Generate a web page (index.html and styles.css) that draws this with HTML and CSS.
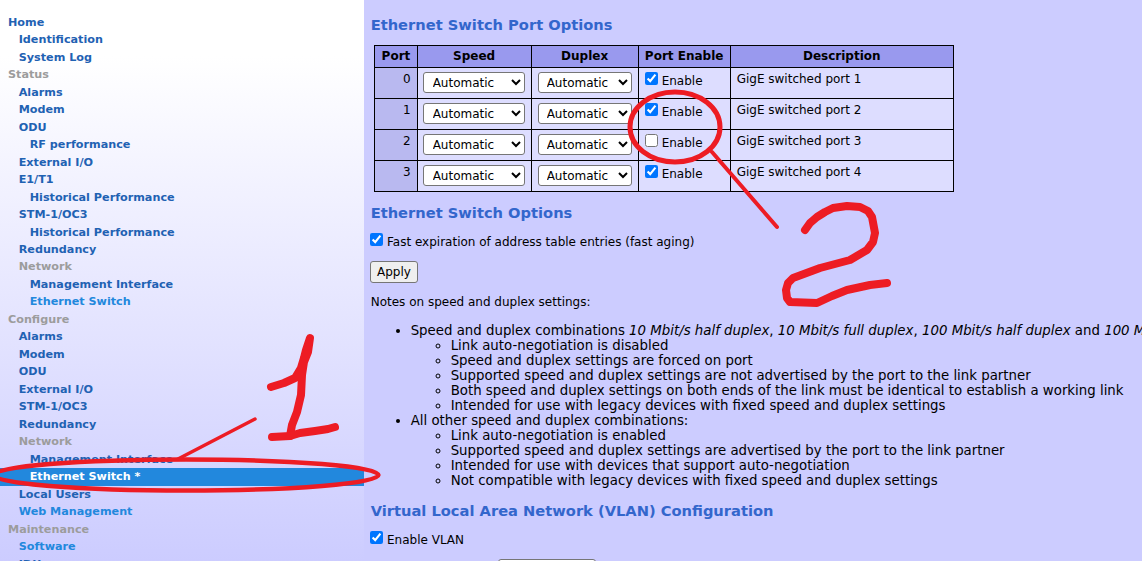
FILE: index.html
```
<!DOCTYPE html>
<html lang="en">
<head>
<meta charset="utf-8">
<title>Ethernet Switch</title>
<link rel="stylesheet" href="styles.css">
</head>
<body>
<div class="page">
<nav class="side">
<a class="n0">Home</a>
<a class="n1">Identification</a>
<a class="n1">System Log</a>
<a class="n0 off">Status</a>
<a class="n1">Alarms</a>
<a class="n1">Modem</a>
<a class="n1">ODU</a>
<a class="n2">RF performance</a>
<a class="n1">External I/O</a>
<a class="n1">E1/T1</a>
<a class="n2">Historical Performance</a>
<a class="n1">STM-1/OC3</a>
<a class="n2">Historical Performance</a>
<a class="n1">Redundancy</a>
<a class="n1 off">Network</a>
<a class="n2">Management Interface</a>
<a class="n2 lt">Ethernet Switch</a>
<a class="n0 off">Configure</a>
<a class="n1">Alarms</a>
<a class="n1">Modem</a>
<a class="n1">ODU</a>
<a class="n1">External I/O</a>
<a class="n1">STM-1/OC3</a>
<a class="n1">Redundancy</a>
<a class="n1 off">Network</a>
<a class="n2">Management Interface</a>
<a class="n2 cur">Ethernet Switch *</a>
<a class="n1">Local Users</a>
<a class="n1 lt">Web Management</a>
<a class="n0 off">Maintenance</a>
<a class="n1 lt">Software</a>
<a class="n1">IDU</a>
</nav>
<main class="main">
<h2 class="h h-first">Ethernet Switch Port Options</h2>
<table class="ports">
<thead><tr><th>Port</th><th>Speed</th><th>Duplex</th><th>Port Enable</th><th class="desc-h">Description</th></tr></thead>
<tbody>
<tr><td class="num">0</td><td class="sel"><select class="s1"><option>Automatic</option></select></td><td class="sel"><select class="s2"><option>Automatic</option></select></td><td class="en"><label class="chk"><input type="checkbox" checked>Enable</label></td><td class="desc">GigE switched port 1</td></tr>
<tr><td class="num">1</td><td class="sel"><select class="s1"><option>Automatic</option></select></td><td class="sel"><select class="s2"><option>Automatic</option></select></td><td class="en"><label class="chk"><input type="checkbox" checked>Enable</label></td><td class="desc">GigE switched port 2</td></tr>
<tr><td class="num">2</td><td class="sel"><select class="s1"><option>Automatic</option></select></td><td class="sel"><select class="s2"><option>Automatic</option></select></td><td class="en"><label class="chk"><input type="checkbox">Enable</label></td><td class="desc">GigE switched port 3</td></tr>
<tr><td class="num">3</td><td class="sel"><select class="s1"><option>Automatic</option></select></td><td class="sel"><select class="s2"><option>Automatic</option></select></td><td class="en"><label class="chk"><input type="checkbox" checked>Enable</label></td><td class="desc">GigE switched port 4</td></tr>
</tbody>
</table>
<h2 class="h h-opt">Ethernet Switch Options</h2>
<label class="chk line"><input type="checkbox" checked>Fast expiration of address table entries (fast aging)</label>
<button class="apply" type="button">Apply</button>
<p class="notes">Notes on speed and duplex settings:</p>
<ul class="outer">
<li>Speed and duplex combinations <em>10 Mbit/s half duplex</em>, <em>10 Mbit/s full duplex</em>, <em>100 Mbit/s half duplex</em> and <em>100 Mbit/s full duplex</em>:
<ul class="inner">
<li>Link auto-negotiation is disabled</li>
<li>Speed and duplex settings are forced on port</li>
<li>Supported speed and duplex settings are not advertised by the port to the link partner</li>
<li>Both speed and duplex settings on both ends of the link must be identical to establish a working link</li>
<li>Intended for use with legacy devices with fixed speed and duplex settings</li>
</ul></li>
<li>All other speed and duplex combinations:
<ul class="inner">
<li>Link auto-negotiation is enabled</li>
<li>Supported speed and duplex settings are advertised by the port to the link partner</li>
<li>Intended for use with devices that support auto-negotiation</li>
<li>Not compatible with legacy devices with fixed speed and duplex settings</li>
</ul></li>
</ul>
<h2 class="h h-vlan">Virtual Local Area Network (VLAN) Configuration</h2>
<label class="chk line line-vlan"><input type="checkbox" checked>Enable VLAN</label>
<select class="vlan"><option></option></select>
</main>
</div>
<svg class="marks" width="1142" height="561" viewBox="0 0 1142 561" fill="none" stroke="#ed1c24" stroke-linecap="round" stroke-linejoin="round" aria-hidden="true">
<ellipse cx="186" cy="475" rx="192.500" ry="15.500" stroke-width="4.500"/>
<path d="M255 419L178 459" stroke-width="3.500"/>
<path d="M271 387L284 383L295 378L301 368L304 358L306 350L310 338L308 352L304 362L302 375L301 395L297 412L292 425L290 436" stroke-width="8"/>
<path d="M272 437L290 436L300 433L315 431L328 429L335 427" stroke-width="8"/>
<ellipse cx="675" cy="127" rx="45" ry="35" stroke-width="5"/>
<path d="M712 152L777 227" stroke-width="4"/>
<path d="M805 230L810 223L817 217L825 212L833 208L847 206L860 207L868 211L872 217L875 233L873 242L867 250L850 260L820 268L793 278L788 283L786 290L787 298L790 302L817 303L832 296L847 290L870 285L887 283" stroke-width="8"/>
</svg>
</body>
</html>
```
FILE: styles.css
```
html, body {
  margin: 0;
  height: 100%;
  overflow: hidden;
}
body {
  font-family: "DejaVu Sans", sans-serif;
  font-size: 13.333px;
  color: #000;
  background: #ccf;
  position: relative;
}
.page {
  display: flex;
  height: 561px;
  overflow: hidden;
}
.side {
  width: 364px;
  flex: none;
  height: 561px;
  overflow: hidden;
  padding-top: 13.71px;
  box-sizing: border-box;
  background: linear-gradient(180deg, #fff 10%, #ccf 100%);
  display: flex;
  flex-direction: column;
  font-size: 11.2px;
  font-weight: bold;
  line-height: 17.49px;
}
.side a {
  display: block;
  flex: none;
  height: 17.49px;
  color: #1f62b3;
}
.n0 { padding-left: 8px; }
.n1 { padding-left: 18.7px; }
.n2 { padding-left: 29.7px; }
.side a.off { color: #9c9c9c; }
.side a.lt { color: #2288dd; }
.side a.cur { background: #2288dd; color: #fff; }
.main {
  flex: 1;
  min-width: 0;
  padding-left: 6.67px;
  overflow: hidden;
  white-space: nowrap;
}
.h {
  margin: 0;
  font-size: 14.667px;
  font-weight: bold;
  color: #3366cc;
  line-height: 18px;
}
.h-first { margin-top: 16px; }
.h-opt { margin-top: 12px; }
.h-vlan { margin-top: 14px; }
.ports {
  border-collapse: collapse;
  margin: 11px 0 0 3.6px;
  table-layout: fixed;
  width: 579.730px;
  font-size: 12px;
  line-height: 15px;
}
.ports th {
  background: #99e;
  border: 1px solid #000;
  height: 21px;
  padding: 0;
  font-size: 12px;
}
.ports th:nth-child(1) { width: 41.400px; }
.ports th:nth-child(2) { width: 113px; }
.ports th:nth-child(3) { width: 106px; }
.ports th:nth-child(4) { width: 91px; }
.ports td {
  background: #ddf;
  border: 1px solid #000;
  height: 30px;
  padding: 0;
  vertical-align: top;
}
.ports td.num {
  background: #b9b9f0;
  text-align: right;
  padding: 4px 6px 0 0;
  height: 26px;
}
.ports td.sel { padding: 4px 0 0 6px; height: 26px; }
.ports td.en { padding: 4px 0 0 6px; height: 26px; }
.ports td.desc { padding: 4px 0 0 6px; height: 26px; }
select {
  font: 12px "DejaVu Sans", sans-serif;
  display: block;
  height: 21px;
  background: #fff;
  color: #000;
  border: 1px solid #767676;
  border-radius: 3px;
  padding: 0 0 0 4px;
  margin: 0;
}
.s1 { width: 102px; margin-left: -1px; padding-left: 5px; }
.s2 { width: 94px; }
.chk {
  display: flex;
  align-items: flex-start;
  font-size: 12px;
  line-height: 19px;
}
.chk input {
  width: 13px;
  height: 13px;
  margin: 0 4px 0 0;
  flex: none;
}
.line { margin: 11px 0 0 -0.67px; line-height: 18px; }
.apply {
  display: block;
  font: 12px "DejaVu Sans", sans-serif;
  height: 22px;
  width: 48px;
  margin: 10px 0 0 -0.67px;
  padding: 0;
  background: #efefef;
  color: #000;
  border: 1px solid #767676;
  border-radius: 3px;
}
.notes { margin: 12px 0 0; font-size: 12px; line-height: 15px; }
.outer {
  margin: 13px 0 0;
  padding-left: 40px;
  list-style: disc;
  line-height: 15px;
}
.inner {
  margin: 0;
  padding-left: 40px;
  list-style: circle;
}
.vlan {
  display: block;
  width: 98px;
  height: 22px;
  margin: 10px 0 0 127px;
}
.marks {
  position: absolute;
  left: 0;
  top: 0;
  pointer-events: none;
}
```
